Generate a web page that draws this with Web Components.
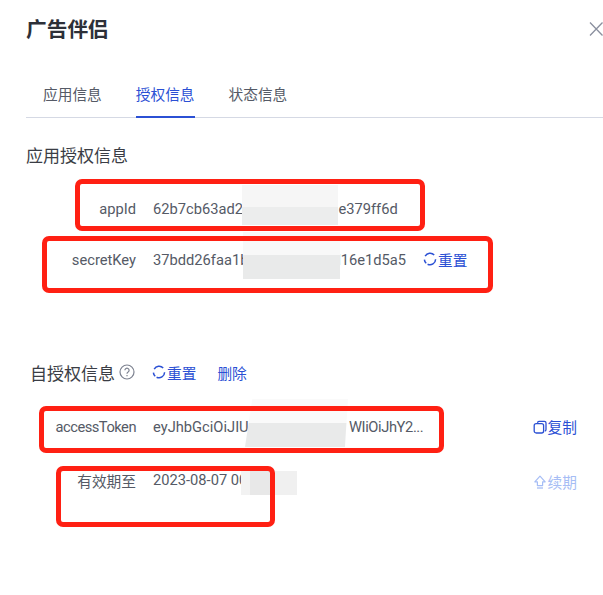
<!DOCTYPE html>
<html lang="zh">
<head>
<meta charset="utf-8">
<title>广告伴侣</title>
<style>
  html, body { margin: 0; background: #fff; }
  body {
    width: 603px;
    height: 595px;
    overflow: hidden;
    font-family: Roboto, "Noto Sans CJK SC", sans-serif;
  }
</style>
</head>
<body>
<ad-dialog heading="广告伴侣">
  <tab-strip></tab-strip>

  <info-section heading="应用授权信息" top="25">
    <info-row label="appId" gap="32">
      <span>62b7cb63ad2f<span style="display:inline-block;width:82px"></span>de379ff6d</span>
    </info-row>
    <info-row label="secretKey" gap="27">
      <span>37bdd26faa1b<span style="display:inline-block;width:84px"></span>d16e1d5a5</span>
      <link-action icon="refresh" style="margin:-2px 0 0 17px">重置</link-action>
    </info-row>
  </info-section>

  <info-section heading="自授权信息" top="89" inset="4" help>
    <link-action slot="actions" icon="refresh">重置</link-action>
    <link-action slot="actions">删除</link-action>
    <info-row label="accessToken" gap="32" tight>
      <span>eyJhbGciOiJIUz<span style="display:inline-block;width:93px"></span><span style="letter-spacing:-.4px">WIiOiJhY2...</span></span>
      <link-action slot="end" icon="copy" style="margin-top:-1px">复制</link-action>
    </info-row>
    <info-row label="有效期至" gap="29">
      <span>2023-08-07 00</span>
      <link-action slot="end" icon="up" faded style="margin-top:3px">续期</link-action>
    </info-row>
  </info-section>

  <!-- 截图上的打码和红框 -->
  <blur-patch slot="over" box="242,185,96,40" kind="a"></blur-patch>
  <blur-patch slot="over" box="243,232,97,47" kind="b"></blur-patch>
  <blur-patch slot="over" box="245,399,103,48" kind="c"></blur-patch>
  <blur-patch slot="over" box="241,471,56,24" kind="d"></blur-patch>
  <mark-box slot="over" box="75,179,350,52"></mark-box>
  <mark-box slot="over" box="42,236,451,57"></mark-box>
  <mark-box slot="over" box="39,406,405,47"></mark-box>
  <mark-box slot="over" box="56,466,219,61"></mark-box>
</ad-dialog>

<script>
const ICONS = {
  refresh: '<path d="M11.2 3A5.6 5.6 0 0 0 2.2 4.1M1.4 7.6A5.6 5.6 0 0 0 3.2 11.3M4.6 12.2A5.6 5.6 0 0 0 12.6 7.2" fill="none" stroke="currentColor" stroke-width="1.5"/>',
  copy: '<path d="M4.5 2.8A1.6 1.6 0 0 1 6 1.4h5.4A1.6 1.6 0 0 1 13 3v6.6a1.5 1.5 0 0 1-1.2 1.5" fill="none" stroke="currentColor" stroke-width="1.3"/><rect x="1.2" y="3.6" width="9.4" height="9.4" rx="2" fill="none" stroke="currentColor" stroke-width="1.3"/>',
  up: '<path d="M7 1.2L12.2 6.8H9.6V10.6H4.4V6.8H1.8Z" fill="none" stroke="currentColor" stroke-width="1.2" stroke-linejoin="round"/><path d="M4 13h6" stroke="currentColor" stroke-width="1.3"/>'
};

class AdDialog extends HTMLElement {
  constructor() {
    super();
    this._shadow = this.attachShadow({ mode: 'open' });
    this._shadow.innerHTML = `
      <style>
        :host { display: block; position: relative; height: 595px; padding-left: 26px; box-sizing: border-box; }
        header { display: flex; justify-content: space-between; align-items: center; padding-top: 16px; height: 28px; }
        h1 { margin: 0; font-size: 20.7px; line-height: 28px; font-weight: 700; color: #2d3038; }
        svg { display: block; margin: -3px 0 0 0; }
      </style>
      <header>
        <h1>${this.getAttribute('heading')}</h1>
        <svg width="14" height="16" viewBox="0 0 14 16"><path d="M1 1.5l12.5 13M13.5 1.5L1 14.5" stroke="#8a8f9e" stroke-width="1.3"/></svg>
      </header>
      <slot></slot>
      <slot name="over"></slot>`;
  }
}

class TabStrip extends HTMLElement {
  constructor() {
    super();
    this._shadow = this.attachShadow({ mode: 'open' });
    const tabs = ['应用信息', '授权信息', '状态信息'];
    this._shadow.innerHTML = `
      <style>
        :host { display: flex; gap: 34px; margin-top: 26px; padding-left: 17px; box-shadow: inset 0 -1px 0 #d5d9e4; font-size: 14.7px; color: #555a66; }
        div { height: 48px; box-sizing: border-box; padding-top: 14px; line-height: 22px; }
        .on { color: #2b50d4; border-bottom: 2px solid #2b50d4; }
      </style>
      ${tabs.map((t, i) => `<div class="${i === 1 ? 'on' : ''}">${t}</div>`).join('')}`;
  }
}

class InfoSection extends HTMLElement {
  constructor() {
    super();
    this._shadow = this.attachShadow({ mode: 'open' });
    const help = this.hasAttribute('help') ? `
      <svg width="16" height="16" viewBox="0 0 16 16" fill="none" stroke="#7d8290" stroke-width="1.2">
        <circle cx="8" cy="8" r="7"/>
        <path d="M5.9 6.3a2.1 2.1 0 1 1 3.2 1.8c-.7.4-1.1.8-1.1 1.6"/>
        <path d="M8 11v1.3"/>
      </svg>` : '';
    this._shadow.innerHTML = `
      <style>
        :host { display: block; margin-top: ${this.getAttribute('top')}px; }
        h2 { margin: 0; display: flex; align-items: center; height: 22px; padding-left: ${this.getAttribute('inset') || 0}px; font-size: 17px; font-weight: 400; color: #3a3d45; }
        svg { margin: 0 17px 0 4px; flex: none; }
        .actions { display: flex; gap: 21px; font-size: 14.7px; }
      </style>
      <h2>${this.getAttribute('heading')}${help}<span class="actions"><slot name="actions"></slot></span></h2>
      <slot></slot>`;
  }
}

class InfoRow extends HTMLElement {
  constructor() {
    super();
    this._shadow = this.attachShadow({ mode: 'open' });
    const tight = this.hasAttribute('tight') ? 'letter-spacing: -.5px;' : '';
    this._shadow.innerHTML = `
      <style>
        :host { display: flex; align-items: center; height: 24px; margin-top: ${this.getAttribute('gap')}px; padding-right: 26px; font-size: 14.7px; color: #555a66; }
        .label { width: 110px; text-align: right; margin-right: 17px; flex: none; ${tight} }
        .value { flex: 1; display: flex; align-items: center; white-space: nowrap; min-width: 0; }
      </style>
      <span class="label">${this.getAttribute('label')}</span>
      <span class="value"><slot></slot></span>
      <slot name="end"></slot>`;
  }
}

class LinkAction extends HTMLElement {
  constructor() {
    super();
    this._shadow = this.attachShadow({ mode: 'open' });
    const name = this.getAttribute('icon');
    const icon = name ? `<svg width="14" height="14" viewBox="0 0 14 14">${ICONS[name]}</svg>` : '';
    this._shadow.innerHTML = `
      <style>
        :host { display: inline-flex; align-items: center; gap: 1px; font-size: 14.7px; white-space: nowrap; color: ${this.hasAttribute('faded') ? '#a6bdf5' : '#2b50d4'}; }
      </style>
      ${icon}<slot></slot>`;
  }
}

// 覆盖层:红框和马赛克的位置就是内容本身
class MarkBox extends HTMLElement {
  constructor() {
    super();
    this._shadow = this.attachShadow({ mode: 'open' });
    const [x, y, w, h] = this.getAttribute('box').split(',');
    this._shadow.innerHTML = `
      <style>
        :host { position: absolute; left: ${x}px; top: ${y}px; width: ${w}px; height: ${h}px; box-sizing: border-box; border: 5px solid #ff2013; border-radius: 7px; }
      </style>`;
  }
}

class BlurPatch extends HTMLElement {
  constructor() {
    super();
    this._shadow = this.attachShadow({ mode: 'open' });
    const [x, y, w, h] = this.getAttribute('box').split(',');
    const looks = {
      a: 'linear-gradient(#f6f6f6 0 54%, #ecedED 54%)',
      b: 'linear-gradient(#f8f8f8 0 49%, #e9eaea 49%)',
      c: 'linear-gradient(#fafafa 0 50%, #e9eaea 50%)',
      d: 'linear-gradient(90deg, #f2f2f2 0 16%, #e8e8e8 16% 60%, #f0f0f0 60%)'
    };
    const clip = this.getAttribute('kind') === 'c' ? 'clip-path: polygon(7% 0, 100% 0, 97% 100%, 0 100%);' : '';
    this._shadow.innerHTML = `
      <style>
        :host { position: absolute; left: ${x}px; top: ${y}px; width: ${w}px; height: ${h}px; background: ${looks[this.getAttribute('kind')]}; ${clip} }
      </style>`;
  }
}

customElements.define('ad-dialog', AdDialog);
customElements.define('tab-strip', TabStrip);
customElements.define('info-section', InfoSection);
customElements.define('info-row', InfoRow);
customElements.define('link-action', LinkAction);
customElements.define('mark-box', MarkBox);
customElements.define('blur-patch', BlurPatch);
</script>
</body>
</html>
